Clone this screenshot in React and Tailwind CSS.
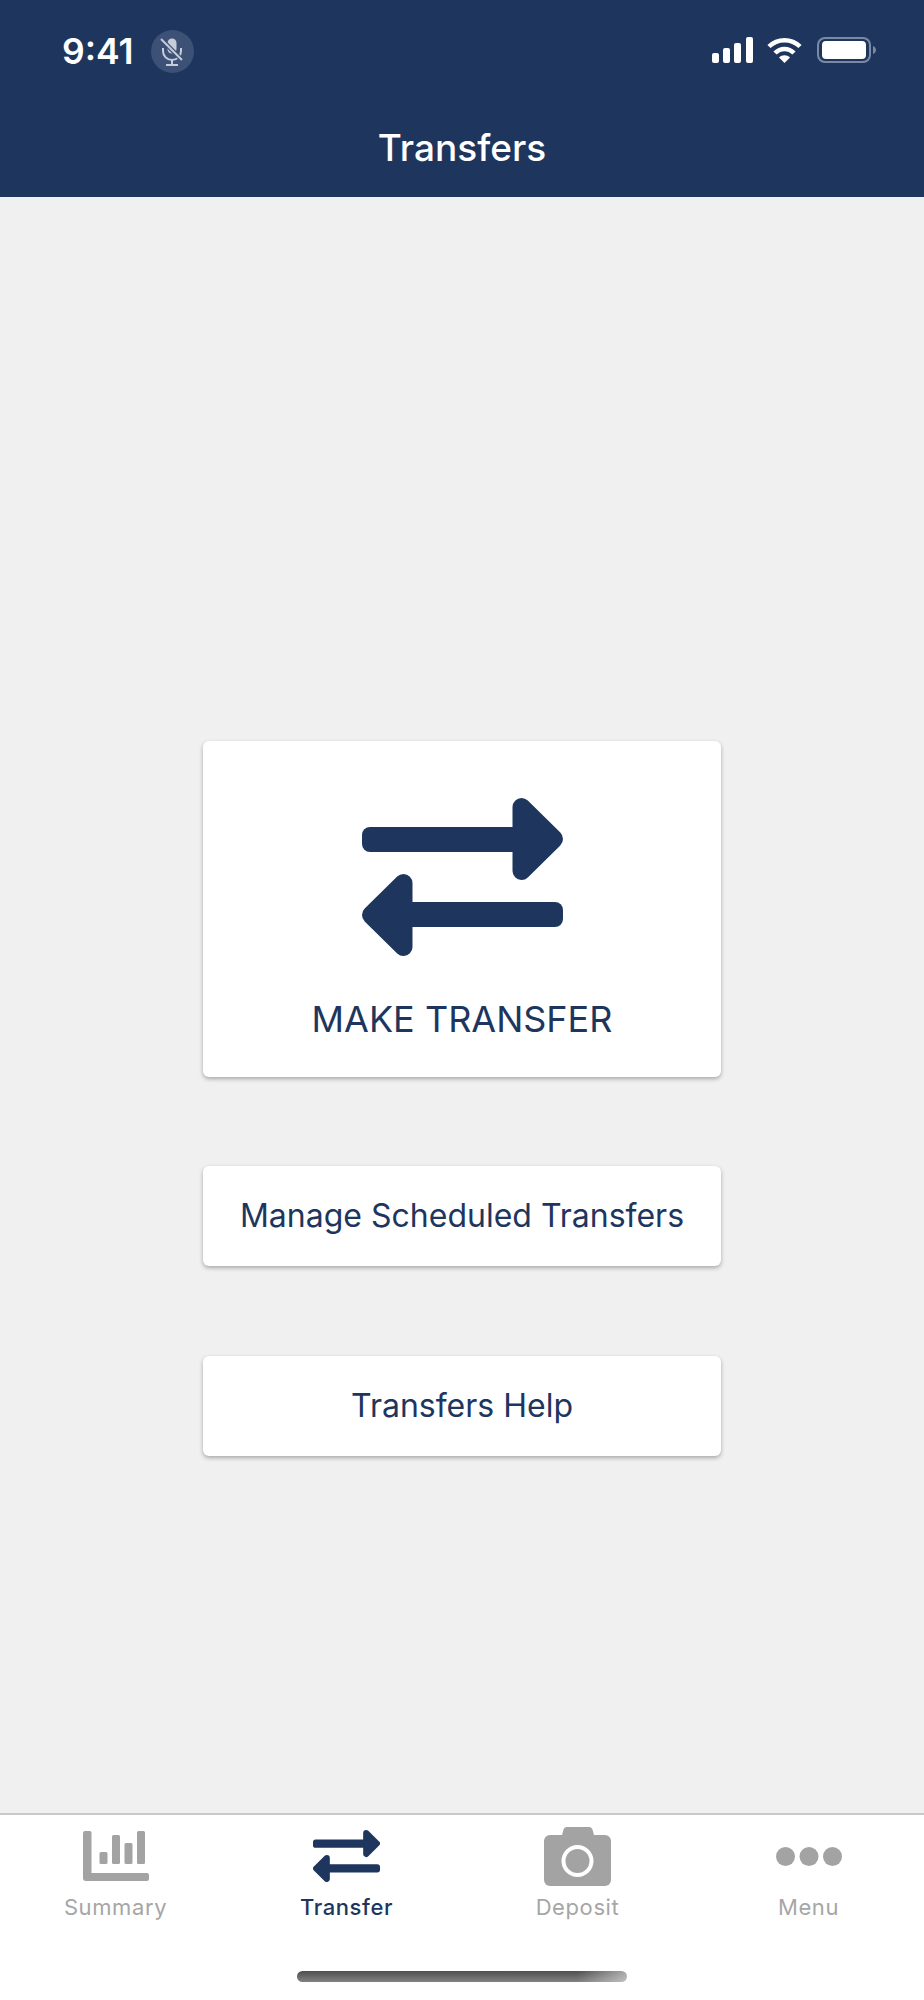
import React from "react";

function TransferIcon({ className }) {
  return (
    <svg viewBox="0 0 201 158" preserveAspectRatio="none" className={className} fill="#1e365e">
      <rect x="0" y="29" width="165" height="25" rx="8" />
      <polygon points="159.5,9 192,41 159.5,73" stroke="#1e365e" strokeWidth="18" strokeLinejoin="round" />
      <rect x="36" y="104" width="165" height="25" rx="8" />
      <polygon points="41.5,85 9,117 41.5,149" stroke="#1e365e" strokeWidth="18" strokeLinejoin="round" />
    </svg>
  );
}

function SummaryIcon() {
  return (
    <svg width="66" height="50" viewBox="0 0 66 50" fill="#a3a3a3">
      <path d="M2 0h5a2 2 0 0 1 1.500 1.500V42h55.500a2 2 0 0 1 2 2v4a2 2 0 0 1-2 2H3a3 3 0 0 1-3-3V2a2 2 0 0 1 2-2z" />
      <rect x="16.500" y="21" width="8" height="12" rx="1.500" />
      <rect x="29" y="4" width="8" height="29" rx="1.500" />
      <rect x="41.500" y="12" width="8" height="21" rx="1.500" />
      <rect x="54" y="0" width="8" height="33" rx="1.500" />
    </svg>
  );
}

function CameraIcon() {
  return (
    <svg width="67" height="59" viewBox="0 0 67 59" fill="#a3a3a3">
      <path d="M18 8l1.500-5.500A3.500 3.500 0 0 1 23 0h22a3.500 3.500 0 0 1 3.500 2.500L50 8z" />
      <rect x="0" y="8" width="67" height="51" rx="6" />
      <circle cx="33.500" cy="34" r="14" fill="none" stroke="#ffffff" strokeWidth="4" />
    </svg>
  );
}

function DotsIcon() {
  return (
    <svg width="66" height="19" viewBox="0 0 66 19" fill="#a3a3a3">
      <circle cx="9.500" cy="9.500" r="9.500" />
      <circle cx="33" cy="9.500" r="9.500" />
      <circle cx="56.500" cy="9.500" r="9.500" />
    </svg>
  );
}

function MicIcon() {
  return (
    <svg width="24" height="28" viewBox="0 0 24 28" fill="none" stroke="#c6cdd9">
      <rect x="7.500" y="0.500" width="9" height="15" rx="4.500" fill="#c6cdd9" stroke="none" />
      <path d="M3 10v3a9 9 0 0 0 18 0v-3" strokeWidth="2" />
      <path d="M12 22v4M6 27h12" strokeWidth="2" />
      <path d="M1 1l21 21" stroke="#3c5175" strokeWidth="4.500" />
      <path d="M1 1l21 21" strokeWidth="2" />
    </svg>
  );
}

function SignalIcon() {
  return (
    <svg width="41" height="26" viewBox="0 0 41 26" fill="#ffffff">
      <rect x="0" y="16" width="7" height="10" rx="2" />
      <rect x="11" y="11" width="7" height="15" rx="2" />
      <rect x="22" y="6" width="7" height="20" rx="2" />
      <rect x="34" y="0" width="7" height="26" rx="2" />
    </svg>
  );
}

function WifiIcon() {
  return (
    <svg width="35" height="26" viewBox="0 0 35 26" fill="none" stroke="#ffffff" strokeWidth="4.500">
      <path d="M2 9.500C10.500 1 24.500 1 33 9.500" />
      <path d="M8 16C13.500 10.500 21.500 10.500 27 16" />
      <path d="M17.500 26L12 20.500C15 17.500 20 17.500 23 20.500Z" fill="#ffffff" stroke="none" />
    </svg>
  );
}

function BatteryIcon() {
  return (
    <svg width="60" height="26" viewBox="0 0 60 26" fill="none">
      <rect x="1" y="1" width="52" height="24" rx="7" stroke="#7b8aa4" strokeWidth="2" />
      <rect x="5" y="4" width="44" height="18" rx="4" fill="#ffffff" />
      <path d="M56 9v8c2-1 3-2.500 3-4s-1-3-3-4z" fill="#7b8aa4" />
    </svg>
  );
}

function Tab({ label, active, children }) {
  return (
    <div className="relative flex flex-col items-center h-full">
      <div className="h-[82px] flex items-center justify-center">{children}</div>
      <span
        className={
          active
            ? "text-[22px] leading-[20px] tracking-[0.6px] font-medium text-[#1e365e]"
            : "text-[22px] leading-[20px] tracking-[0.6px] text-[#a6a6a6]"
        }
      >
        {label}
      </span>
    </div>
  );
}

export default function App() {
  return (
    <div className="w-[924px] h-[2000px] flex flex-col bg-[#f0f0f0] font-['Inter',sans-serif] overflow-hidden">
      <header className="h-[197px] shrink-0 bg-[#1e365e] flex flex-col">
        <div className="h-[128px] pl-[62px] pr-[47px] pt-[30px] flex items-start justify-between">
          <div className="flex items-center gap-[17px]">
            <span className="text-[35.500px] leading-[43px] font-semibold text-white">9:41</span>
            <span className="w-[43px] h-[43px] rounded-full bg-[#3c5175] flex items-center justify-center">
              <MicIcon />
            </span>
          </div>
          <div className="flex items-center pt-[7px]">
            <SignalIcon />
            <span className="ml-[14px] mr-[15px] flex"><WifiIcon /></span>
            <BatteryIcon />
          </div>
        </div>
        <h1 className="text-center text-[37px] leading-[40px] font-medium text-white">Transfers</h1>
      </header>

      <main className="flex-1 flex flex-col items-center pt-[544px]">
        <button className="w-[518px] h-[336px] flex flex-col items-center bg-white rounded-md shadow-[0_2px_4px_rgba(0,0,0,0.3)] pt-[57px]">
          <TransferIcon className="w-[201px] h-[158px]" />
          <span className="mt-[41px] text-[36px] leading-[44px] text-[#1e365e]">MAKE TRANSFER</span>
        </button>
        <button className="mt-[89px] w-[518px] h-[100px] bg-white rounded-md shadow-[0_2px_4px_rgba(0,0,0,0.3)] text-[32px] leading-[44px] text-[#1e365e]">
          Manage Scheduled Transfers
        </button>
        <button className="mt-[90px] w-[518px] h-[100px] bg-white rounded-md shadow-[0_2px_4px_rgba(0,0,0,0.3)] text-[32px] leading-[44px] text-[#1e365e]">
          Transfers Help
        </button>
      </main>

      <footer className="h-[187px] shrink-0 bg-white border-t-2 border-[#c8c8c8] flex flex-col">
        <div className="grid grid-cols-4 h-[156px]">
          <Tab label="Summary"><SummaryIcon /></Tab>
          <Tab label="Transfer" active><TransferIcon className="w-[67px] h-[52px]" /></Tab>
          <Tab label="Deposit"><CameraIcon /></Tab>
          <Tab label="Menu"><DotsIcon /></Tab>
        </div>
        <div className="flex justify-center">
          <div className="w-[330px] h-[11px] rounded-full bg-[linear-gradient(90deg,transparent_85%,rgba(255,255,255,0.5)_100%),linear-gradient(180deg,#4f4f4f_0%,#828282_100%)]" />
        </div>
      </footer>
    </div>
  );
}
